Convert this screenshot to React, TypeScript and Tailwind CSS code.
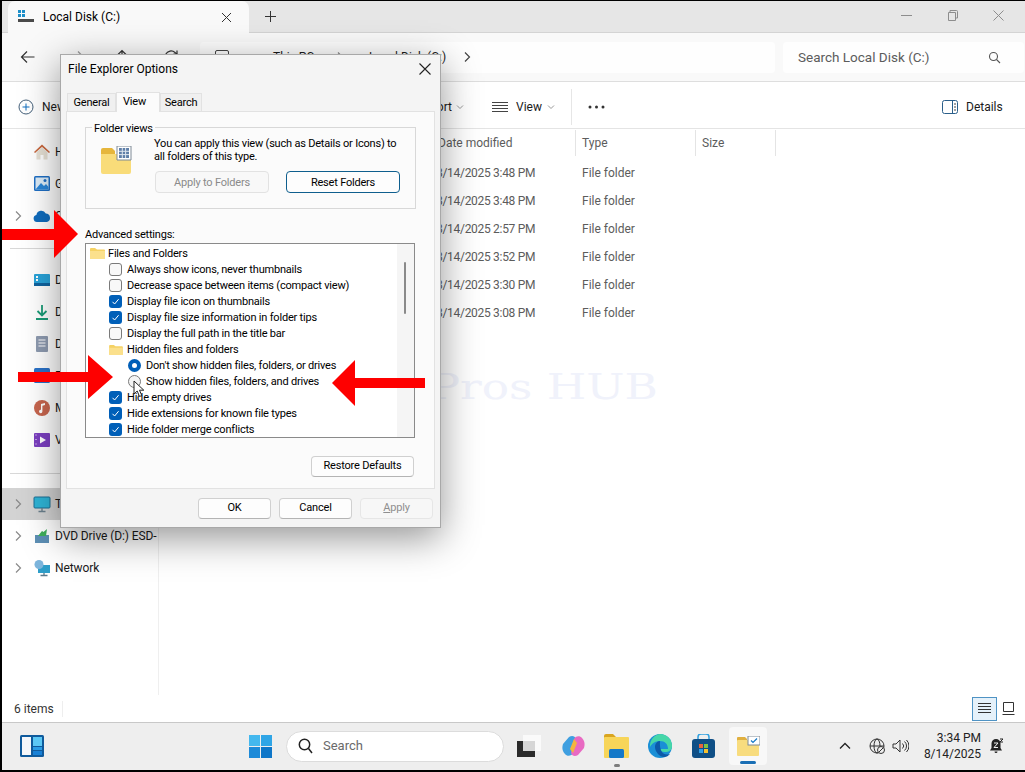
import React from "react";

const font = "font-['Roboto','Noto_Sans',sans-serif]";

function Chevron({ cls = "" }: { cls?: string }) {
  return (
    <svg width="8" height="12" viewBox="0 0 8 12" className={cls} fill="none" stroke="#8a8a8a" strokeWidth="1.2">
      <path d="M2 1.5 6.5 6 2 10.5" />
    </svg>
  );
}

function FolderSmall({ w = 15, h = 12 }: { w?: number; h?: number }) {
  return (
    <svg width={w} height={h} viewBox="0 0 15 12">
      <path d="M0 2a1 1 0 0 1 1-1h4l2 1.5h7a1 1 0 0 1 1 1V11a1 1 0 0 1-1 1H1a1 1 0 0 1-1-1z" fill="#f5d264" />
      <path d="M0 4h15v7a1 1 0 0 1-1 1H1a1 1 0 0 1-1-1z" fill="#fbe08c" />
    </svg>
  );
}

function NavIcon({ kind }: { kind: string }) {
  const s = { width: 18, height: 18, viewBox: "0 0 18 18", className: "shrink-0" };
  switch (kind) {
    case "home":
      return (
        <svg {...s}>
          <path d="M1 9 9 1.5 17 9l-1 1-7-6-7 6z" fill="#c9683f" />
          <path d="M3.5 9 9 4.5 14.5 9v7.5h-4V12h-3v4.5h-4z" fill="#e6e0d4" />
        </svg>
      );
    case "gallery":
      return (
        <svg {...s}>
          <rect x="1" y="1" width="16" height="15" rx="1.5" fill="#1f6fc4" />
          <rect x="2.5" y="2.5" width="13" height="12" fill="#dcecf8" />
          <path d="M2.5 14.5 8 8l3 3 2-2 2.5 3v2.5z" fill="#2a86d8" />
          <circle cx="12" cy="5.5" r="1.5" fill="#1f6fc4" />
        </svg>
      );
    case "cloud":
      return (
        <svg {...s}>
          <path d="M4 15a3.6 3.6 0 0 1-.6-7.1 5 5 0 0 1 9.4-1.3A4.3 4.3 0 0 1 14 15z" fill="#0f6cbd" />
        </svg>
      );
    case "desktop":
      return (
        <svg {...s}>
          <rect x="1" y="3" width="16" height="12" rx="1" fill="#29a3d9" />
          <rect x="1" y="12" width="16" height="3" fill="#10639f" />
          <rect x="3" y="5" width="2" height="2" fill="#fff" />
          <rect x="3" y="8" width="2" height="2" fill="#fff" />
        </svg>
      );
    case "download":
      return (
        <svg {...s} fill="none" stroke="#1a9b76" strokeWidth="1.8">
          <path d="M9 2v10M4.5 8 9 12.5 13.5 8M3 16h12" />
        </svg>
      );
    case "doc":
      return (
        <svg {...s}>
          <rect x="3" y="1" width="12" height="16" rx="1" fill="#8e9bb0" />
          <path d="M5.5 5h7M5.5 8h7M5.5 11h7" stroke="#fff" strokeWidth="1.2" />
        </svg>
      );
    case "pic":
      return (
        <svg {...s}>
          <rect x="1" y="1" width="16" height="15" rx="1.5" fill="#2a72c8" />
          <path d="M2 15 8 8l3 3 2-2 3 4v2z" fill="#7fb4e8" />
        </svg>
      );
    case "music":
      return (
        <svg {...s}>
          <circle cx="9" cy="9" r="8" fill="#c8664f" />
          <path d="M8 12.5V5l4-1v2l-2.6.7v5.8a1.7 1.7 0 1 1-1.4-1.7z" fill="#fff" />
        </svg>
      );
    case "video":
      return (
        <svg {...s}>
          <rect x="1" y="2" width="16" height="14" rx="1" fill="#7b3fc0" />
          <path d="M7 5.5v7l6-3.5z" fill="#fff" />
          <path d="M2.5 4h1M2.5 8.5h1M2.5 13h1" stroke="#fff" strokeWidth="1.2" />
        </svg>
      );
    case "pc":
      return (
        <svg {...s}>
          <rect x="1" y="2" width="16" height="11" rx="1" fill="#2fb4d6" stroke="#1d6f94" />
          <path d="M9 13v3M5.5 16.5h7" stroke="#6a7f8c" strokeWidth="1.4" />
        </svg>
      );
    case "dvd":
      return (
        <svg {...s}>
          <path d="M2 8h14v8H2z" fill="#5d8fb5" />
          <path d="M5 9 9 4l1.5 1L14 2l-1 7z" fill="#3fae5a" />
        </svg>
      );
    default:
      return (
        <svg {...s}>
          <rect x="5" y="6" width="12" height="8" fill="#2e9ec9" />
          <circle cx="6" cy="5.5" r="4.5" fill="#7db5dc" />
          <path d="M11 14v2.5M7.5 16.5h7" stroke="#5a7a8c" strokeWidth="1.3" />
        </svg>
      );
  }
}

function NavRow({ icon, label, chev, active }: { icon: string; label: string; chev?: boolean; active?: boolean }) {
  return (
    <div className={`flex h-[32px] items-center ${active ? "bg-[#d3d3d3]" : ""}`}>
      <div className="flex w-[31px] shrink-0 justify-center pl-[1px]">{chev && <Chevron />}</div>
      <NavIcon kind={icon} />
      <span className="ml-[4px] whitespace-nowrap text-[12px] tracking-[-0.1px] text-[#1a1a1a]">{label}</span>
    </div>
  );
}

function Check({ on }: { on: boolean }) {
  return on ? (
    <span className="flex h-[13px] w-[13px] shrink-0 items-center justify-center rounded-[3px] bg-[#005fb8]">
      <svg width="9" height="9" viewBox="0 0 9 9" fill="none" stroke="#fff" strokeWidth="1">
        <path d="M1.5 4.8 3.6 7l4-4.8" />
      </svg>
    </span>
  ) : (
    <span className="h-[13px] w-[13px] shrink-0 rounded-[3px] border border-[#7a7a7a] bg-[#f8f8f8]" />
  );
}

function CheckRow({ on, label }: { on: boolean; label: string }) {
  return (
    <div className="flex h-[16px] items-center whitespace-nowrap pl-[23px]">
      <Check on={on} />
      <span className="ml-[5px] pt-[2px]">{label}</span>
    </div>
  );
}

function RadioRow({ on, label }: { on: boolean; label: string }) {
  return (
    <div className="flex h-[16px] items-center whitespace-nowrap pl-[42px]">
      {on ? (
        <span className="h-[13px] w-[13px] shrink-0 rounded-full border-[4px] border-[#005fb8] bg-white" />
      ) : (
        <span className="h-[13px] w-[13px] shrink-0 rounded-full border border-[#7a7a7a] bg-[#f4f4f4]" />
      )}
      <span className="ml-[5px] pt-[2px]">{label}</span>
    </div>
  );
}

function Btn({ children, w, cls = "" }: { children: React.ReactNode; w: string; cls?: string }) {
  return (
    <div className={`flex h-[21px] items-center justify-center rounded-[4px] border border-[#d0d0d0] border-b-[#b4b4b4] bg-[#fdfdfd] text-black ${w} ${cls}`}>
      {children}
    </div>
  );
}

function Arrow({ cls, w, h, d }: { cls: string; w: number; h: number; d: string }) {
  return (
    <svg width={w} height={h} viewBox={`0 0 ${w} ${h}`} className={`absolute ${cls}`}>
      <path d={d} fill="#fe0000" />
    </svg>
  );
}

function FileRow({ date }: { date: string }) {
  return (
    <div className="grid h-[28px] grid-cols-[146px_120px] items-center pl-[277px] text-[12px] text-[#5c5c5c]">
      <span className="whitespace-nowrap tracking-[-0.3px]">{date}</span>
      <span>File folder</span>
    </div>
  );
}

function AddressBar() {
  return (
    <div className="flex h-[49px] items-center border-b border-[#dedede] bg-[#f9f9f9] pl-[17px]">
      <svg width="18" height="18" viewBox="0 0 18 18" fill="none" stroke="#333" strokeWidth="1.2">
        <path d="M15.5 9h-13M8 3.5 2.5 9 8 14.5" />
      </svg>
      <svg className="ml-[31px]" width="18" height="18" viewBox="0 0 18 18" fill="none" stroke="#999" strokeWidth="1.2">
        <path d="M2.5 9h13M10 3.500 15.500 9 10 14.500" />
      </svg>
      <svg className="ml-[27px]" width="18" height="18" viewBox="0 0 18 18" fill="none" stroke="#333" strokeWidth="1.2">
        <path d="M9 15.500v-13M3.500 8 9 2.500 14.500 8" />
      </svg>
      <svg className="ml-[31px]" width="18" height="18" viewBox="0 0 18 18" fill="none" stroke="#333" strokeWidth="1.2">
        <path d="M15 9a6 6 0 1 1-2-4.500L15 6" />
        <path d="M15 2.500V6h-3.500" />
      </svg>
      <div className="ml-[20px] flex h-[31px] w-[575px] items-center rounded-[4px] bg-[#fefefe] pl-[15px] text-[12px] text-[#1a1a1a]">
        <svg width="14" height="14" viewBox="0 0 14 14" fill="none" stroke="#444">
          <rect x=".5" y=".5" width="13" height="10" rx="1.500" />
          <path d="M4 13h6" />
        </svg>
        <span className="ml-[44px] w-[42px] whitespace-nowrap">This PC</span>
        <span className="ml-[21px]"><Chevron /></span>
        <span className="ml-[25px] w-[76px] whitespace-nowrap">Local Disk (C:)</span>
        <span className="ml-[18px]"><Chevron cls="[&>path]:stroke-[#444]" /></span>
      </div>
      <div className="ml-[8px] flex h-[31px] w-[241px] items-center justify-between rounded-[4px] bg-[#fefefe] pl-[15px] pr-[23px] text-[13.5px] text-[#5c5c5c]">
        <span>Search Local Disk (C:)</span>
        <svg width="13" height="13" viewBox="0 0 13 13" fill="none" stroke="#555" strokeWidth="1.1">
          <circle cx="5.5" cy="5.5" r="4" />
          <path d="M8.5 8.5 12 12" />
        </svg>
      </div>
    </div>
  );
}

function TitleBar() {
  return (
    <div className="flex h-[32px] border-b border-[#d4d4d4] bg-[#e6e6e6]">
      <div className="ml-[6px] flex h-[32px] w-[241px] items-center rounded-t-[7px] bg-[#f9f9f9] pl-[10px]">
        <svg width="16" height="16" viewBox="0 0 16 16">
          <rect x="0" y="1" width="3" height="3" fill="#1d8fc9" />
          <rect x="4" y="1" width="3" height="3" fill="#1d8fc9" />
          <rect x="0" y="5" width="3" height="3" fill="#1d8fc9" />
          <rect x="4" y="5" width="3" height="3" fill="#1d8fc9" />
          <rect x="0" y="10" width="16" height="3" fill="#4a4a4a" />
        </svg>
        <span className="ml-[9px] w-[178px] text-[12px] text-black">Local Disk (C:)</span>
        <svg width="11" height="11" viewBox="0 0 11 11" stroke="#333" strokeWidth="1">
          <path d="M1 1l9 9M10 1l-9 9" />
        </svg>
      </div>
      <div className="ml-[16px] flex items-center">
        <svg width="11" height="11" viewBox="0 0 11 11" stroke="#333" strokeWidth="1">
          <path d="M5.500 0v11M0 5.500h11" />
        </svg>
      </div>
      <div className="ml-auto flex items-center gap-[35px] pb-[2px] pr-[21px]">
        <svg width="11" height="11" viewBox="0 0 11 11" stroke="#8d8d8d"><path d="M0 5.500h11" /></svg>
        <svg width="11" height="11" viewBox="0 0 11 11" fill="none" stroke="#8d8d8d"><path d="M1.500 2.500h7v8h-7zM3 2.500V.5h6.500a1 1 0 0 1 1 1v6.500h-2" /></svg>
        <svg width="11" height="11" viewBox="0 0 11 11" stroke="#8d8d8d"><path d="M.5.5l10 10M10.500.5l-10 10" /></svg>
      </div>
    </div>
  );
}

function CommandBar() {
  return (
    <div className="flex h-[47px] items-center border-b border-[#e4e4e4] bg-white pl-[16px] pt-[3px] text-[12px] text-[#1a1a1a]">
      <svg width="16" height="16" viewBox="0 0 16 16" fill="none" stroke="#44607a" strokeWidth="1">
        <circle cx="8" cy="8" r="7" />
        <path d="M8 4.500v7M4.500 8h7" stroke="#0f6cbd" />
      </svg>
      <span className="ml-[8px] w-[24px]">New</span>
      <span className="ml-[356px] w-[30px] whitespace-nowrap text-right">Sort</span>
      <svg className="ml-[4px]" width="8" height="6" viewBox="0 0 8 6" fill="none" stroke="#999"><path d="M1 1.500 4 4.500l3-3" /></svg>
      <svg className="ml-[28px]" width="16" height="12" viewBox="0 0 16 12" stroke="#444"><path d="M0 1.500h16M0 4.500h16M0 7.500h16M0 10.500h16" /></svg>
      <span className="ml-[8px] w-[27px]">View</span>
      <svg className="ml-[4px]" width="8" height="6" viewBox="0 0 8 6" fill="none" stroke="#999"><path d="M1 1.500 4 4.500l3-3" /></svg>
      <span className="ml-[16px] h-[36px] w-px bg-[#e6e6e6]" />
      <svg className="ml-[16px]" width="17" height="4" viewBox="0 0 17 4" fill="#333"><circle cx="2" cy="2" r="1.500" /><circle cx="8.500" cy="2" r="1.500" /><circle cx="15" cy="2" r="1.500" /></svg>
      <svg className="ml-[337px]" width="16" height="14" viewBox="0 0 16 14" fill="none" stroke="#2b5f8a"><rect x=".5" y=".5" width="15" height="13" rx="2" /><path d="M10.500.5v13" /><path d="M12 4h2M12 7h2M12 10h2" stroke="#444" /></svg>
      <span className="ml-[8px]">Details</span>
    </div>
  );
}

function Sidebar() {
  return (
    <div className="flex w-[157px] shrink-0 flex-col overflow-hidden border-r border-[#efefef] pt-[7px]">
      <NavRow icon="home" label="Home" />
      <NavRow icon="gallery" label="Gallery" />
      <NavRow icon="cloud" label="OneDrive" chev />
      <div className="mx-[8px] mb-[15px] mt-[16px] h-px bg-[#d8d8d8]" />
      <NavRow icon="desktop" label="Desktop" />
      <NavRow icon="download" label="Downloads" />
      <NavRow icon="doc" label="Documents" />
      <NavRow icon="pic" label="Pictures" />
      <NavRow icon="music" label="Music" />
      <NavRow icon="video" label="Videos" />
      <div className="mx-[8px] mb-[14px] mt-[17px] h-px bg-[#d8d8d8]" />
      <NavRow icon="pc" label="This PC" chev active />
      <NavRow icon="dvd" label="DVD Drive (D:) ESD-" chev />
      <NavRow icon="net" label="Network" chev />
    </div>
  );
}

function FileList() {
  return (
    <div className="relative min-w-0 flex-1 bg-white">
      <div className="flex h-[27px] items-center pl-[279px] text-[12px] text-[#5c5c5c]">
        <span className="w-[137px]">Date modified</span>
        <span className="h-[26px] w-px bg-[#e4e4e4]" />
        <span className="w-[119px] pl-[6px]">Type</span>
        <span className="h-[26px] w-px bg-[#e4e4e4]" />
        <span className="w-[79px] pl-[6px]">Size</span>
        <span className="h-[26px] w-px bg-[#e4e4e4]" />
      </div>
      <div className="pt-[3px]">
        {["8/14/2025 3:48 PM", "8/14/2025 3:48 PM", "8/14/2025 2:57 PM", "8/14/2025 3:52 PM", "8/14/2025 3:30 PM", "8/14/2025 3:08 PM"].map((d, i) => (
          <FileRow key={i} date={d} />
        ))}
      </div>
      <div className="absolute left-[208px] top-[238px] origin-left scale-x-[1.26] whitespace-nowrap font-['DejaVu_Serif',serif] text-[36px] leading-[40px] text-[#f0f2fb]">
        IT Pros HUB
      </div>
    </div>
  );
}

function Dialog() {
  return (
    <div className="absolute left-[60px] top-[54px] flex h-[474px] w-[381px] flex-col border border-[#a8a8a8] bg-[#f4f4f4] text-[11px] tracking-[-0.2px] text-black shadow-[0_10px_36px_rgba(0,0,0,0.42)]">
      <div className="flex h-[28px] shrink-0 items-center justify-between pl-[7px] pr-[9px] text-[12px] tracking-normal">
        <span>File Explorer Options</span>
        <svg width="12" height="12" viewBox="0 0 12 12" stroke="#222" strokeWidth="1.1"><path d="M.5.5l11 11M11.500.5l-11 11" /></svg>
      </div>
      <div className="flex h-[28px] shrink-0 items-end pl-[6px]">
        <div className="flex h-[18px] w-[49px] items-center justify-center border border-b-0 border-[#e2e2e2] bg-[#f0f0f0] pt-[2px]">General</div>
        <div className="relative top-[1px] flex h-[20px] w-[44px] items-start border-x border-t border-[#e2e2e2] bg-[#fbfbfb] pl-[6px] pt-[1px]">View</div>
        <div className="flex h-[18px] w-[42px] items-center justify-center border border-b-0 border-[#e2e2e2] bg-[#f0f0f0] pt-[2px]">Search</div>
      </div>
      <div className="mx-[5px] flex h-[378px] shrink-0 flex-col border border-[#e2e2e2] bg-[#fbfbfb] pl-[18px]">
        <div className="relative mt-[15px] h-[82px] w-[331px] border border-[#d8d8d8] pl-[15px] pt-[9px]">
          <span className="absolute -top-[7px] left-[6px] bg-[#fbfbfb] px-[2px] leading-[16px]">Folder views</span>
          <div className="flex">
            <div className="w-[53px] shrink-0 pt-[9px]">
              <svg width="32" height="28" viewBox="0 0 32 28">
                <path d="M0 4a2 2 0 0 1 2-2h9l3 3v5H0z" fill="#e6b63c" />
                <path d="M0 8h30v18a2 2 0 0 1-2 2H2a2 2 0 0 1-2-2z" fill="#f9dc79" />
                <path d="M16 0h14v14H16z" fill="#fff" stroke="#7f8a96" />
                <path d="M18 2h10v10H18z" fill="#5f7fa8" />
                <path d="M21.300 2v10M24.600 2v10M18 5.300h10M18 8.600h10" stroke="#dfe6ee" />
              </svg>
            </div>
            <div className="leading-[13px]">
              <div className="whitespace-nowrap">You can apply this view (such as Details or Icons) to</div>
              <div>all folders of this type.</div>
              <div className="ml-[1px] mt-[8px] flex gap-[17px]">
                <Btn w="w-[114px]" cls="!h-[22px] !border-[#e2e2e2] !bg-[#f8f8f8] !text-[#8a8a8a]">Apply to Folders</Btn>
                <Btn w="w-[114px]" cls="!h-[22px] !border-[#0f5f8e]">Reset Folders</Btn>
              </div>
            </div>
          </div>
        </div>
        <div className="mt-[18px] h-[16px] leading-[16px]">Advanced settings:</div>
        <div className="relative h-[195px] w-[330px] overflow-hidden border border-[#8a8a8a] bg-white pt-[1px]">
          <div className="flex h-[16px] items-center whitespace-nowrap pl-[4px]">
            <FolderSmall />
            <span className="ml-[3px] pt-[2px]">Files and Folders</span>
          </div>
          <CheckRow on={false} label="Always show icons, never thumbnails" />
          <CheckRow on={false} label="Decrease space between items (compact view)" />
          <CheckRow on label="Display file icon on thumbnails" />
          <CheckRow on label="Display file size information in folder tips" />
          <CheckRow on={false} label="Display the full path in the title bar" />
          <div className="flex h-[16px] items-center whitespace-nowrap pl-[23px]">
            <FolderSmall w={14} h={11} />
            <span className="ml-[4px] pt-[2px]">Hidden files and folders</span>
          </div>
          <RadioRow on label="Don't show hidden files, folders, or drives" />
          <RadioRow on={false} label="Show hidden files, folders, and drives" />
          <CheckRow on label="Hide empty drives" />
          <CheckRow on label="Hide extensions for known file types" />
          <CheckRow on label="Hide folder merge conflicts" />
          <div className="absolute bottom-0 right-0 top-0 w-[17px] bg-[#f5f5f5]">
            <div className="ml-[7px] mt-[18px] h-[52px] w-[2px] rounded-full bg-[#8a8a8a]" />
          </div>
        </div>
        <div className="mt-[18px] flex w-[329px] justify-end">
          <Btn w="w-[103px]">Restore Defaults</Btn>
        </div>
      </div>
      <div className="flex flex-1 justify-end gap-[8px] pr-[7px] pt-[9px]">
        <Btn w="w-[73px]">OK</Btn>
        <Btn w="w-[73px]">Cancel</Btn>
        <Btn w="w-[73px]" cls="!border-[#e6e6e6] !bg-[#f7f7f7] !text-[#8f8f8f]"><span><u>A</u>pply</span></Btn>
      </div>
    </div>
  );
}

function Taskbar() {
  return (
    <div className="flex h-[48px] shrink-0 items-center border-t border-[#c8c8c8] bg-[#eeeeee] pb-[1px] pl-[18px]">
      <svg width="24" height="22" viewBox="0 0 24 22">
        <rect width="24" height="22" rx="1.500" fill="#0f5a9c" />
        <rect x="2" y="2" width="9" height="18" fill="#f5f7fa" />
        <rect x="13" y="2" width="9" height="9" fill="#5cc8f5" />
        <rect x="13" y="12" width="9" height="3" fill="#2a9ce6" />
        <rect x="13" y="16" width="9" height="4" fill="#1780d6" />
      </svg>
      <svg className="ml-[205px]" width="23" height="23" viewBox="0 0 23 23">
        <rect width="11" height="11" fill="#44b8ee" />
        <rect x="12" width="11" height="11" fill="#2fa5e6" />
        <rect y="12" width="11" height="11" fill="#1d8ad8" />
        <rect x="12" y="12" width="11" height="11" fill="#0e76c8" />
      </svg>
      <div className="ml-[14px] flex h-[31px] w-[218px] items-center rounded-full border border-[#dcdcdc] bg-white pl-[11px] text-[13px] text-[#6a6a6a]">
        <svg width="15" height="16" viewBox="0 0 15 16" fill="none" stroke="#222" strokeWidth="1.500">
          <circle cx="6.500" cy="6.500" r="5.200" />
          <path d="M10.500 10.500 14 15" />
        </svg>
        <span className="ml-[10px]">Search</span>
      </div>
      <svg className="ml-[13px]" width="24" height="22" viewBox="0 0 24 22">
        <rect x="6" y="0" width="18" height="16" fill="#fafafa" />
        <rect x="0" y="6" width="18" height="16" fill="#2a2a2a" />
        <rect x="6" y="6" width="12" height="10" fill="#d6d6d6" />
      </svg>
      <svg className="ml-[21px]" width="23" height="22" viewBox="0 0 23 22">
        <path d="M7 2c3-2 6-1 7 2l-3 14c-1 3-6 4-8 1-3-3-3-7-2-10z" fill="#3f9fe0" />
        <path d="M16 20c-3 2-6 1-7-2l3-14c1-3 6-4 8-1 3 3 3 7 2 10z" fill="#e86ac2" />
        <path d="M12 4l3 4-4 10-3-4z" fill="#f3b53f" />
      </svg>
      <div className="relative ml-[19px]">
        <svg className="block" width="25" height="24" viewBox="0 0 25 24">
          <path d="M0 2a2 2 0 0 1 2-2h7l3 3v4H0z" fill="#d9a520" />
          <rect y="3" width="25" height="21" rx="1" fill="#f7d559" />
          <rect x="5" y="15" width="15" height="9" rx="1.500" fill="#1478c8" />
        </svg>
        <span className="absolute left-[10px] top-[30px] h-[3px] w-[6px] rounded-full bg-[#7d7d7d]" />
      </div>
      <svg className="ml-[19px]" width="24" height="24" viewBox="0 0 24 24">
        <circle cx="12" cy="12" r="12" fill="#1a8fd6" />
        <path d="M12 0a12 12 0 0 1 12 12c0 4-3 6-7 6-3 0-5-1-5-3h8c0-5-3-8-8-8-4 0-8 2-10 6A12 12 0 0 1 12 0z" fill="#46d7a8" />
        <path d="M12 7c-3 0-5 3-5 6 0 5 5 10 9 10 3 0 4-1 6-3-6 2-11-2-10-13z" fill="#0c5aa8" />
      </svg>
      <svg className="ml-[20px]" width="23" height="24" viewBox="0 0 23 24">
        <path d="M6 6V3a3 3 0 0 1 3-3h5a3 3 0 0 1 3 3v3" fill="none" stroke="#2fa0e0" strokeWidth="1.500" />
        <rect y="5" width="23" height="19" rx="3" fill="#0f4f86" />
        <rect x="7" y="10" width="4" height="4" fill="#e8643c" />
        <rect x="12" y="10" width="4" height="4" fill="#7cc243" />
        <rect x="7" y="15" width="4" height="4" fill="#2fa0e8" />
        <rect x="12" y="15" width="4" height="4" fill="#f5c02f" />
      </svg>
      <div className="relative ml-[14px] flex h-[38px] w-[38px] items-center justify-center rounded-[4px] bg-[#f8f8f8]">
        <svg width="23" height="20" viewBox="0 0 23 20">
          <path d="M0 2a1 1 0 0 1 1-1h7l2 2v3H0z" fill="#e0b040" />
          <rect y="4" width="22" height="16" rx="1" fill="#f8dc7e" />
          <rect x="11" y="0" width="12" height="9" fill="#fff" stroke="#7d8a96" />
          <path d="M14 4.500 16 6.500 20 2.500" fill="none" stroke="#1478c8" strokeWidth="1.200" />
        </svg>
        <span className="absolute bottom-[1px] left-[11px] h-[3px] w-[16px] rounded-full bg-[#1a6fb5]" />
      </div>
      <svg className="ml-[72px]" width="12" height="8" viewBox="0 0 12 8" fill="none" stroke="#222" strokeWidth="1.300"><path d="M1 6.500 6 1.500l5 5" /></svg>
      <svg className="ml-[18px]" width="17" height="17" viewBox="0 0 17 17" fill="none" stroke="#333" strokeWidth="1">
        <circle cx="8" cy="8" r="7" />
        <ellipse cx="8" cy="8" rx="3" ry="7" />
        <path d="M1 8h14" />
        <circle cx="12" cy="12" r="3.500" fill="#eee" />
        <path d="M10 14l4-4" />
      </svg>
      <svg className="ml-[6px]" width="17" height="14" viewBox="0 0 17 14" fill="none" stroke="#333" strokeWidth="1">
        <path d="M1 5h3l4-4v12L4 9H1zM10.500 4.500a3.500 3.500 0 0 1 0 5M12.500 2.500a6 6 0 0 1 0 9M14.500 1a8.500 8.500 0 0 1 0 12" />
      </svg>
      <div className="ml-[8px] w-[64px] text-right text-[12px] leading-[16px] text-[#222]">
        <div>3:34 PM</div>
        <div>8/14/2025</div>
      </div>
      <svg className="ml-[8px]" width="15" height="16" viewBox="0 0 15 16">
        <path d="M7 1a4.500 4.500 0 0 0-4.500 4.500V10L1 12.500h12L11.500 10V5.500A4.500 4.500 0 0 0 7 1zM5.500 13.500h3a1.500 1.500 0 0 1-3 0z" fill="#222" />
        <path d="M5 5h4L5 9.500h4" fill="none" stroke="#eee" />
        <path d="M11 1h3l-3 3h3" fill="none" stroke="#222" />
      </svg>
    </div>
  );
}

export default function App() {
  return (
    <div className={`relative flex h-[772px] w-[1025px] flex-col overflow-hidden bg-black pb-[2px] pl-[2px] pt-[1px] ${font}`}>
      <TitleBar />
      <AddressBar />
      <CommandBar />
      <div className="flex min-h-0 flex-1 bg-white">
        <Sidebar />
        <FileList />
      </div>
      <div className="flex h-[27px] shrink-0 items-center bg-white pl-[12px] text-[12px] text-[#333]">
        <span className="w-[40px] whitespace-nowrap">6 items</span>
        <span className="ml-[8px] h-[16px] w-px bg-[#eee]" />
        <div className="ml-auto flex items-center pr-[10px]">
          <div className="flex h-[24px] w-[25px] items-center justify-center border border-[#4f93c4] bg-[#e5f1fa]">
            <svg width="13" height="11" viewBox="0 0 13 11" stroke="#333"><path d="M0 .5h13M0 3.500h13M0 6.500h13M0 9.500h13" /></svg>
          </div>
          <svg className="ml-[5px]" width="13" height="13" viewBox="0 0 13 13" fill="none" stroke="#333"><path d="M1.500.5h10v9h-10zM.5 12.500h12" /></svg>
        </div>
      </div>
      <Taskbar />
      <Dialog />
      <Arrow cls="left-[2px] top-[210px]" w={76} h={48} d="M0 19h52V0l24 24-24 24V30H0z" />
      <Arrow cls="left-[18px] top-[355px]" w={95} h={44} d="M0 17h70V0l25 22-25 22V27H0z" />
      <Arrow cls="left-[332px] top-[360px]" w={93} h={46} d="M93 18H23V0L0 23l23 23V28h70z" />
      <svg className="absolute left-[133px] top-[380px]" width="14" height="18" viewBox="0 0 14 18">
        <path d="M1 1v13l3.200-3 2.300 5.500 2.300-1-2.300-5.300h4.300z" fill="#fff" stroke="#222" strokeWidth="1" />
      </svg>
    </div>
  );
}
